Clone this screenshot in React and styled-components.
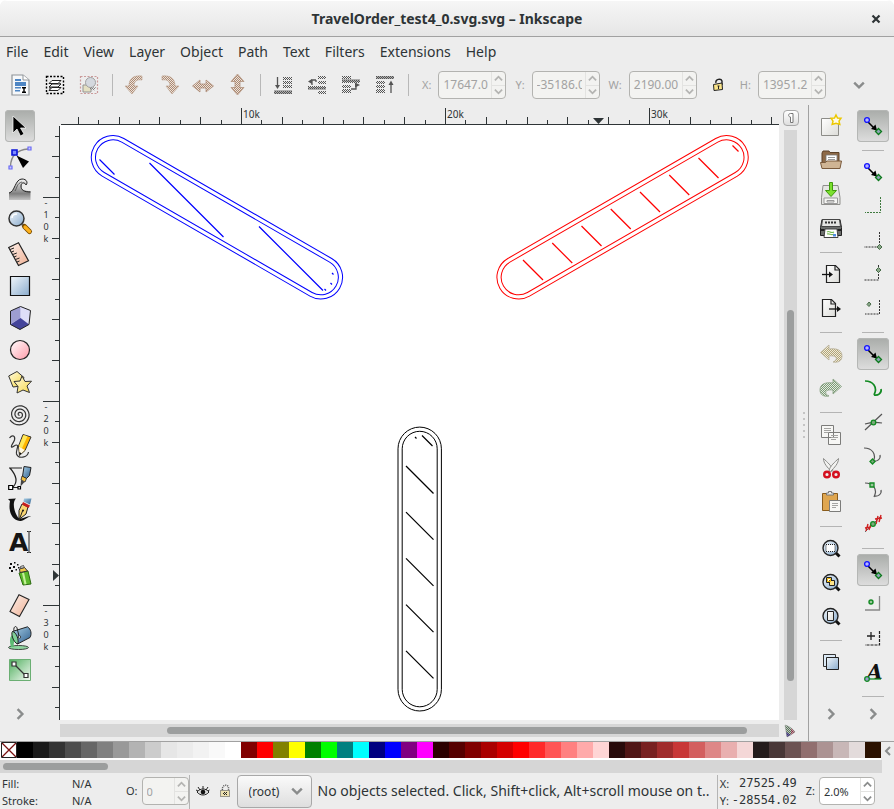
import React from 'react';
import styled, { createGlobalStyle, css } from 'styled-components';

const GlobalStyle = createGlobalStyle`
  * {
    box-sizing: border-box;
  }
  body {
    margin: 0;
    background: #fff;
    color: #2e3436;
    font-family: 'Noto Sans', 'Open Sans', sans-serif;
    font-size: 14px;
  }
  button, input, select {
    font-family: inherit;
    color: inherit;
  }
  svg {
    display: block;
    flex: none;
  }
`;

const Window = styled.div`
  display: flex;
  flex-direction: column;
  min-height: 100vh;
  background: #ededed;
  border-radius: 7px 7px 0 0;
  overflow: hidden;
`;

const TitleBar = styled.header`
  display: grid;
  grid-template-columns: 36px 1fr 36px;
  align-items: center;
  height: 37px;
  border-top: 1px solid #fff;
  border-bottom: 1px solid #a1a1a1;
  background: linear-gradient(#f6f6f6, #e6e6e6);
`;

const Title = styled.h1`
  grid-column: 2;
  margin: 0;
  font-size: 14px;
  font-weight: 700;
  text-align: center;
`;

const PlainButton = styled.button`
  display: flex;
  align-items: center;
  justify-content: center;
  padding: 0;
  border: none;
  background: none;
`;

const MenuBar = styled.nav`
  display: flex;
  align-items: center;
  gap: 15px;
  height: 29px;
  padding: 0 6px;
`;

const MenuItem = styled.button`
  padding: 0;
  border: none;
  background: none;
  font-size: 14px;
  line-height: 20px;
`;

const Toolbar = styled.div`
  display: flex;
  align-items: center;
  height: 39px;
  padding: 0 18px 2px 4px;
`;

const ToolbarButton = styled(PlainButton)`
  width: 34px;
  height: 34px;
  & > svg {
    opacity: ${(p) => (p.disabled ? 0.75 : 1)};
  }
`;

const ToolbarDivider = styled.div`
  display: flex;
  justify-content: center;
  width: 12px;
  &::before {
    content: '';
    width: 1px;
    height: 22px;
    background: #b8b8b8;
  }
`;

const Fields = styled.div`
  display: flex;
  align-items: center;
  gap: 9px;
  margin-left: 8px;
`;

const Field = styled.div`
  display: flex;
  align-items: center;
  gap: ${(p) => p.$gap || 7}px;
`;

const FieldLabel = styled.label`
  font-size: 11px;
  line-height: 16px;
  color: ${(p) => (p.$muted ? '#a2a2a2' : '#2e3436')};
`;

const LockButton = styled(PlainButton)`
  width: 25px;
  height: 28px;
`;

const MoreButton = styled(PlainButton)`
  width: 34px;
  height: 34px;
  margin-left: auto;
`;

const SpinBox = styled.div`
  display: grid;
  grid-template-columns: 1fr 14px;
  width: ${(p) => p.$width}px;
  height: 28px;
  border: 1px solid #b3b3b0;
  border-radius: 4px;
  background: ${(p) => (p.$muted ? '#f3f3f1' : '#fff')};
  overflow: hidden;
`;

const SpinInput = styled.input`
  min-width: 0;
  margin: 0 3px 0 4px;
  padding: 0;
  border: none;
  background: none;
  font-size: ${(p) => p.$size || 12}px;
  &:disabled {
    color: #a2a2a2;
  }
`;

const SpinArrows = styled.div`
  display: grid;
  grid-template-rows: 1fr 1fr;
  border-left: 1px solid #e3e3e1;
  & > button + button {
    border-top: 1px solid #e3e3e1;
  }
`;

const Workspace = styled.main`
  display: flex;
  flex: 1;
`;

const ToolRail = styled.div`
  display: flex;
  flex-direction: column;
  align-items: center;
  width: ${(p) => p.$width}px;
  padding: 5px 0 15px;
`;

const RailButton = styled(PlainButton)`
  flex: none;
  width: ${(p) => (p.$large ? 32 : 30)}px;
  height: 32px;
  margin-bottom: ${(p) => (p.$large ? 2 : 0)}px;
  border-radius: 4px;
  ${(p) =>
    p.$active &&
    css`
      background-image: linear-gradient(#a9aca9, #dedede);
      box-shadow: inset 0 0 0 1px #b5b7b5;
    `}
`;

const RailDivider = styled.div`
  flex: none;
  display: flex;
  align-items: center;
  width: 22px;
  height: 12px;
  &::before {
    content: '';
    flex: 1;
    height: 1px;
    background: #b4b4b4;
  }
`;

const RailMore = styled(PlainButton)`
  width: 24px;
  height: 24px;
  margin-top: auto;
`;

const Rails = styled.div`
  display: flex;
  padding-left: 1px;
  border-left: 1px solid #a1a1a1;
`;

const Editor = styled.section`
  flex: 1;
  min-width: 0;
  display: grid;
  grid-template-columns: 20px minmax(0, 1fr) 29px;
  grid-template-rows: 20px minmax(0, 1fr) 21px;
`;

const HorizontalRuler = styled.svg`
  grid-area: 1 / 2;
  width: 100%;
  height: 20px;
`;

const VerticalRuler = styled.svg`
  grid-area: 2 / 1;
  width: 20px;
  height: 100%;
`;

const RulerText = styled.text`
  font-size: ${(p) => p.$size}px;
  fill: #2e3436;
`;

const Canvas = styled.svg`
  grid-area: 2 / 2;
  width: 100%;
  height: 100%;
  background: #fff;
`;

const CornerCell = styled.div`
  grid-area: ${(p) => p.$row} / 3;
  display: flex;
  align-items: center;
  padding-left: 4px;
`;

const GuideButton = styled(PlainButton)`
  width: 16px;
  height: 16px;
  margin-top: 5px;
  border: 1px solid #a8a8a8;
  border-radius: 4px;
  background: linear-gradient(#fff, #dedede);
`;

const VerticalEdge = styled.div`
  grid-area: 2 / 3;
  display: flex;
  align-items: center;
  gap: 6px;
  padding: 5px 0 0 5px;
`;

const VerticalTrough = styled.div`
  display: grid;
  grid-template-rows: 180fr 372fr 39fr;
  align-self: stretch;
  width: 13px;
  padding: 0 3px;
  background: #d6d6d6;
`;

const HorizontalTrough = styled.div`
  grid-area: 3 / 2;
  display: grid;
  grid-template-columns: 107fr 580fr 32fr;
  height: 13px;
  margin-top: 4px;
  padding: 3px 0;
  background: #d6d6d6;
`;

const Thumb = styled.div`
  grid-area: ${(p) => p.$area};
  border-radius: 4px;
  background: #9c9e9e;
`;

const Grip = styled.div`
  display: grid;
  gap: 4px;
  & > i {
    width: 2px;
    height: 2px;
    background: #c4c4c4;
  }
`;

const Palette = styled.div`
  display: flex;
  border-top: 1px solid #a1a1a1;
`;

const Swatches = styled.div`
  display: flex;
  flex: 1;
  min-width: 0;
  overflow: hidden;
  padding: 0 0 2px 1px;
  background: #fff;
`;

const Swatch = styled.button`
  flex: none;
  width: 16px;
  height: 16px;
  padding: 0;
  border: none;
  background: ${(p) => p.$color};
`;

const PaletteMenu = styled(PlainButton)`
  width: 13px;
`;

const PaletteTrough = styled.div`
  height: 13px;
  margin-right: 12px;
  padding: 3px;
  background: #d6d6d6;
`;

const PaletteThumb = styled.div`
  width: 12%;
  height: 7px;
  border-radius: 4px;
  background: #9c9e9e;
`;

const StatusBar = styled.footer`
  display: flex;
  align-items: center;
  height: 36px;
`;

const StyleGrid = styled.dl`
  display: grid;
  grid-template-columns: 70px 54px;
  margin: 0;
  padding: 2px 0 0 2px;
  font-size: 11px;
  line-height: 17px;
  & > dd {
    margin: 0;
  }
`;

const StatusDivider = styled.div`
  align-self: stretch;
  width: 1px;
  margin-top: 2px;
  background: #b4b4b4;
`;

const LayerButtons = styled.div`
  display: flex;
  align-items: center;
  gap: 8px;
  padding: 0 5px 0 6px;
`;

const StatusIcon = styled(PlainButton)`
  width: 14px;
  height: 20px;
`;

const LayerPicker = styled.div`
  display: grid;
  align-items: center;
  width: 75px;
  height: 33px;
  border: 1px solid #a8a8a8;
  border-radius: 4px;
  background: linear-gradient(#fafafa, #dedede);
  & > * {
    grid-area: 1 / 1;
  }
  & > svg {
    justify-self: end;
    margin-right: 8px;
    pointer-events: none;
  }
`;

const LayerSelect = styled.select`
  appearance: none;
  width: 100%;
  height: 100%;
  padding: 0 0 0 11px;
  border: none;
  background: none;
  font-size: 12px;
`;

const Message = styled.p`
  flex: 1;
  min-width: 0;
  margin: 0;
  padding-left: 6px;
  font-size: 14px;
  line-height: 20px;
  white-space: nowrap;
  overflow: hidden;
`;

const Coordinates = styled.dl`
  display: grid;
  grid-template-columns: 12px 65px;
  margin: 0 9px 0 2px;
  padding-top: 1px;
  font-size: 11px;
  line-height: 17px;
  & > dd {
    margin: 0;
    font-family: 'DejaVu Sans Mono', monospace;
    font-size: 12px;
    text-align: right;
  }
`;

const ZoomField = styled(Field)`
  padding-right: 19px;
`;

const Chevron = ({ dir = 'down', size = 10, color = '#8a8c8c' }) => {
  const turn = { down: 0, left: 90, up: 180, right: 270 }[dir];
  return (
    <svg width={size} height={size} viewBox="0 0 10 10">
      <path
        d="M1 3l4 4 4-4"
        transform={`rotate(${turn} 5 5)`}
        fill="none"
        stroke={color}
        strokeWidth="2"
      />
    </svg>
  );
};

const Icon = ({ children, size = 24 }) => (
  <svg width={size} height={size} viewBox="0 0 24 24" fill="none" stroke="none" overflow="visible">
    {children}
  </svg>
);

const Gradients = () => (
  <svg width="0" height="0" style={{ position: 'absolute' }} aria-hidden="true">
    <defs>
      <linearGradient id="blue" x1="0" y1="0" x2="1" y2="1">
        <stop offset="0" stopColor="#f2f7fb" />
        <stop offset="1" stopColor="#8aaccd" />
      </linearGradient>
      <linearGradient id="pink" x1="0" y1="0" x2="1" y2="1">
        <stop offset="0" stopColor="#fff" />
        <stop offset="1" stopColor="#ff9aa8" />
      </linearGradient>
      <linearGradient id="peach" x1="0" y1="0" x2="1" y2="1">
        <stop offset="0" stopColor="#fdf0ea" />
        <stop offset="1" stopColor="#efb195" />
      </linearGradient>
      <linearGradient id="yellow" x1="0" y1="0" x2="1" y2="1">
        <stop offset="0" stopColor="#fffbe0" />
        <stop offset="1" stopColor="#f7d848" />
      </linearGradient>
      <linearGradient id="gray" x1="0" y1="0" x2="0" y2="1">
        <stop offset="0" stopColor="#f4f4f4" />
        <stop offset="0.700" stopColor="#7f7f7f" />
        <stop offset="1" stopColor="#c4c4c4" />
      </linearGradient>
      <linearGradient id="green" x1="0" y1="0" x2="1" y2="1">
        <stop offset="0" stopColor="#4fae5d" />
        <stop offset="1" stopColor="#f5fbf5" />
      </linearGradient>
      <linearGradient id="steel" x1="0" y1="0" x2="1" y2="1">
        <stop offset="0" stopColor="#a8cfe6" />
        <stop offset="1" stopColor="#2f5f8f" />
      </linearGradient>
      <linearGradient id="paper" x1="0" y1="0" x2="1" y2="1">
        <stop offset="0" stopColor="#fff" />
        <stop offset="1" stopColor="#dcdcd8" />
      </linearGradient>
      <pattern id="dither" width="2" height="2" patternUnits="userSpaceOnUse">
        <rect width="1" height="1" fill="#222" />
        <rect x="1" y="1" width="1" height="1" fill="#222" />
      </pattern>
      <pattern id="ditherBrown" width="2" height="2" patternUnits="userSpaceOnUse">
        <rect width="2" height="2" fill="#ecdfd6" />
        <rect width="1" height="1" fill="#97694a" />
        <rect x="1" y="1" width="1" height="1" fill="#97694a" />
      </pattern>
      <pattern id="ditherOlive" width="2" height="2" patternUnits="userSpaceOnUse">
        <rect width="2" height="2" fill="#f0ebd8" />
        <rect width="1" height="1" fill="#b0a478" />
        <rect x="1" y="1" width="1" height="1" fill="#b0a478" />
      </pattern>
      <pattern id="ditherGreen" width="2" height="2" patternUnits="userSpaceOnUse">
        <rect width="2" height="2" fill="#e4ebe0" />
        <rect width="1" height="1" fill="#7b9a76" />
        <rect x="1" y="1" width="1" height="1" fill="#7b9a76" />
      </pattern>
    </defs>
  </svg>
);

const Magnifier = ({ children }) => (
  <Icon>
    <path d="M17 17l3.500 3.500" stroke="#111" strokeWidth="3" />
    <circle cx="11.500" cy="12" r="7.500" fill="url(#blue)" stroke="#222" strokeWidth="1.400" />
    {children}
  </Icon>
);

const SnapArrow = () => (
  <Icon>
    <path d="M7 8l8 8" stroke="#000" strokeWidth="1.600" />
    <path d="M16 16.500l-6-1.500 4.500-4.500z" fill="#000" />
    <circle cx="6" cy="6" r="2.400" fill="#b6b6ff" stroke="#1414ff" strokeWidth="1.300" />
    <path
      d="M17.500 14.500l3 3-3 3-3-3z"
      fill="#8fa5b5"
      stroke="#0c7a1c"
      strokeWidth="1.300"
    />
  </Icon>
);

const arrowDown = 'M19 3C9 2 6 7 6 13H2l7 8 6-8h-4c0-4 2-7 8-6z';

const spiralPath = () => {
  const points = [];
  for (let a = 0; a <= 1140; a += 15) {
    const r = 0.4 + a / 108;
    const t = ((a - 90) * Math.PI) / 180;
    points.push(`${(11.5 - r * Math.cos(t)).toFixed(1)} ${(12.5 - r * Math.sin(t)).toFixed(1)}`);
  }
  return `M${points.join('L')}`;
};

const icons = {
  // toolbox
  select: (
    <Icon>
      <path
        d="M5 2v17l4-4 3.500 7 3.500-2-3.500-6H18z"
        fill="#000"
        stroke="#fff"
        strokeWidth=".7"
      />
    </Icon>
  ),
  node: (
    <Icon>
      <path d="M2.500 20C3 10 8 4 20 3" stroke="#888" strokeWidth="1.400" />
      <path d="M4 4h5v5H4z" fill="#7d8bff" stroke="#0a14d8" strokeWidth="1.600" />
      <path d="M20 1h3v3h-3zM1 20h3v3H1z" fill="#c9c9ff" stroke="#6a6af5" strokeWidth="1.200" />
      <path d="M8.500 9.500L21 15.500 15 22z" fill="#000" />
    </Icon>
  ),
  tweak: (
    <Icon>
      <path
        d="M1 15c6-1 6-14 14-14 5 0 5 5 3 6-1-2-4-2-4.500 1-.5 4 3 5 9 5v9H1z"
        fill="url(#gray)"
      />
      <path d="M1 15c6-1 6-14 13-14 5 0 6 4 4 6-1-3-5-3-5 1 0 4 3 6 9.500 6" stroke="#222" />
      <path d="M7 13c2-3 2-8 7-9" stroke="#444" strokeWidth=".8" />
    </Icon>
  ),
  zoom: (
    <Icon>
      <path d="M14 14l3 3" stroke="#666" strokeWidth="2.500" />
      <path d="M16.500 16.500l5 5" stroke="#7a4c00" strokeWidth="5" strokeLinecap="round" />
      <path d="M17 17l4.500 4.500" stroke="#ffb21c" strokeWidth="3.200" strokeLinecap="round" />
      <circle cx="8.500" cy="8.500" r="7.500" fill="url(#blue)" stroke="#333" strokeWidth="1.500" />
      <path d="M4 8c0-3 3-4 5-4" stroke="#fff" strokeWidth="1.500" />
    </Icon>
  ),
  measure: (
    <Icon>
      <path d="M.7 5.500L10.500.7l10 18-10 4.800z" fill="url(#peach)" stroke="#222" strokeWidth="1.200" />
      <path
        d="M2 7.500l4-1.500M3.500 10l2.500-1M4.800 12.500l4-1.500M6 15l2.500-1M7.500 17.500l4-1.500M9 20l2.500-1"
        stroke="#222"
      />
    </Icon>
  ),
  rect: (
    <Icon>
      <path d="M2.500 2.500h19v19h-19z" fill="url(#blue)" stroke="#111" strokeWidth="1.200" />
    </Icon>
  ),
  box: (
    <Icon>
      <path d="M2.500 5l10-4.500 10 4-1.500 14-9 5-9.500-5z" fill="#c9c9ee" />
      <path d="M2.500 5l10-4.500V12l-10 6z" fill="#9d9dd0" />
      <path d="M12.500.5l10 4L21 18l-8.500-6z" fill="#dedef8" />
      <path d="M2.500 18.500l10-6.500 8.500 6.500-9 5z" fill="#44449a" />
      <path d="M2.500 5l10-4.500 10 4-1.500 14-9 5-9.500-5z" stroke="#222" />
    </Icon>
  ),
  circle: (
    <Icon>
      <circle cx="12" cy="12" r="9.500" fill="url(#pink)" stroke="#222" strokeWidth="1.200" />
    </Icon>
  ),
  star: (
    <Icon>
      <path d="M.7 6L9 1.500l7 6-3 8.500-8 1z" fill="url(#yellow)" stroke="#333" />
      <path
        d="M14 6l3 5.500 6.500-.3-4.500 4.800 2.500 6.500-6.500-2.500-6 3 1-6.500-4-5 6-.5z"
        fill="url(#yellow)"
        stroke="#333"
      />
    </Icon>
  ),
  spiral: (
    <Icon>
      <path d={spiralPath()} stroke="#333" strokeWidth="1.200" />
    </Icon>
  ),
  pencil: (
    <Icon>
      <path
        d="M1.500 4c3-4 6-2 5 2-1 3-4 6-3 7s3-2 5-2c3 0-1 6 0 9 2 5 11 4 12-2"
        stroke="#333"
        strokeWidth="1.200"
      />
      <path d="M15 .5l8 2.500-6 13.500-5.500 5-1-9.500z" fill="#ffb400" stroke="#333" />
      <path d="M15.500 1l4 1.200-5.500 12-3-2z" fill="#ffe95a" />
      <path d="M11 12.500l5.700 3.500-5 5z" fill="#fff8e4" />
      <path d="M11.300 18l2.200 1.300-2 2z" fill="#000" />
    </Icon>
  ),
  bezier: (
    <Icon>
      <path d="M1 2h13M2 2c7 8 8 14 3 19M5 21.500h6" stroke="#222" strokeWidth="1.200" />
      <path d="M.7 19.500h4v4h-4zM10 20.500h2.500v2.500H10z" fill="#fff" stroke="#000" strokeWidth="1.200" />
      <path d="M16 .5l7 1-1.500 8-3 3-4-2z" fill="url(#steel)" stroke="#222" />
      <path d="M14 10l4.500 2.500-1.500 3.500-4-2z" fill="#f0c040" stroke="#222" strokeWidth=".8" />
      <path d="M13 14l3.500 2-4 4.500z" fill="#444" />
    </Icon>
  ),
  calligraphy: (
    <Icon>
      <path d="M0 1l8-.5c-4 4-2 13 2 19 4 3 9-2 13-1-4 0-7 5-11 4.500C4 22 0 14 2 3z" fill="#111" />
      <path d="M14 6l6 3-2 7-7 5.500v-9z" fill="#f9d673" stroke="#222" />
      <path d="M11.500 21l3-8" stroke="#222" />
      <circle cx="15" cy="12.500" r="1" fill="#111" />
      <path d="M15 4l7 3.500-1.500 2.500L14 6.500z" fill="#c81e1e" />
      <path d="M16 .5h7.500l-1.500 6-6.500-3z" fill="url(#steel)" />
    </Icon>
  ),
  text: (
    <Icon>
      <path d="M21 2v20M19 1.500h1.500L21 2l.5-.5H23M19 22.500h1.500L21 22l.5.500H23" stroke="#222" />
      <text x="1" y="20.500" fontFamily="DejaVu Sans" fontWeight="700" fontSize="25" fill="#151515">
        A
      </text>
    </Icon>
  ),
  spray: (
    <Icon>
      <path
        d="M2 1h2v2H2zM6 0h1.500v1.500H6zM1 5h2v2H1zM5 4h2v2H5zM9 2h1.500v1.500H9zM3 8h2v2H3zM7.500 7H9v1.500H7.500zM10 5h1.500v1.500H10z"
        fill="#111"
      />
      <path d="M11 11l9-2 3 13-8 1z" fill="#5cb82c" stroke="#2c6a10" />
      <path d="M14 11l2-.5 2.500 11.500-2 .5z" fill="#c5f09a" />
      <path d="M11.500 7l5-1.500 3 3.500-7.500 1.500z" fill="#f3c64c" stroke="#333" />
      <path d="M12.500 4.500l3-1 .8 2-3.500 1z" fill="#ddd" stroke="#333" strokeWidth=".8" />
    </Icon>
  ),
  eraser: (
    <Icon>
      <path d="M11 .8l10 4.700-9.500 17L2 17.500z" fill="url(#peach)" stroke="#222" strokeWidth="1.100" />
    </Icon>
  ),
  bucket: (
    <Icon>
      <ellipse cx="10.500" cy="21.500" rx="10" ry="2" fill="#8fd6a0" stroke="#333" strokeWidth=".9" />
      <path d="M4 9c-3 3-2 8-1 12h3c-1-4 1-6 1-9z" fill="#5dbb74" />
      <path d="M4.500 5.500L19.500.8C23 3 24 8 22 11.500L9.500 18z" fill="url(#steel)" stroke="#222" />
      <path d="M4.500 5.500c-2 2 1 11 5 12.500 2-3-1-12-5-12.500z" fill="#7fd098" stroke="#222" />
      <path d="M6 5c-1-4 2-6 3-3l2 8" stroke="#222" />
      <circle cx="11.500" cy="11" r="1.200" fill="#fff" stroke="#222" strokeWidth=".8" />
    </Icon>
  ),
  gradient: (
    <Icon>
      <path d="M1.500 1.500h21v21h-21z" fill="url(#green)" stroke="#6aae72" />
      <path d="M6 6l11 11" stroke="#333" strokeWidth="1.200" />
      <path d="M4 4h4v4H4zM16 15.500h4v4h-4z" fill="#fff" stroke="#333" strokeWidth="1.200" />
    </Icon>
  ),

  // control bar
  selectAll: (
    <Icon>
      <path d="M3 2h11l6 5v15H3z" fill="#f6f8fa" stroke="#8f9498" strokeWidth="1.200" />
      <path d="M14 2v5h6" fill="#fff" stroke="#8f9498" />
      <path d="M6 6h6v2H6zM6 9h11v4H6zM6 14h7v1.500H6zM6 17h5v1.500H6z" fill="#4e86c4" />
      <path d="M12 14h6v6h-6z" fill="#fff" />
      <path d="M13 14.700h4M15 14.700v4.500M13 19.300h4" stroke="#000" strokeWidth="1.400" />
    </Icon>
  ),
  selectLayers: (
    <Icon>
      <path d="M3.500 3.500h17v17h-17z" stroke="#000" strokeWidth="1.400" strokeDasharray="2 1.500" />
      <path d="M7 14l3-3h8l-3 3zv3h8l3-3" fill="#fff" stroke="#222" />
      <path d="M6 17.500l3-3h9l-3 3zM6 14l3-3h9l-3 3z" fill="#fff" stroke="#222" />
      <path d="M6 10.500l3-3h9l-3 3z" fill="#fff" stroke="#222" />
    </Icon>
  ),
  deselect: (
    <Icon>
      <path
        d="M3.500 3.500h17v17h-17z"
        stroke="#c08080"
        strokeWidth="1.200"
        strokeDasharray="2 1.500"
      />
      <path d="M6 12h8v7H6z" fill="#e2dcb4" stroke="#777" />
      <circle cx="13.500" cy="9.500" r="5" fill="#ccd2da" stroke="#888" />
      <path d="M12 15l5 3 2-4" fill="url(#dither)" opacity=".7" />
    </Icon>
  ),
  rotateLeft: (
    <Icon>
      <path d={arrowDown} fill="url(#ditherBrown)" stroke="#a98468" strokeWidth=".6" />
    </Icon>
  ),
  rotateRight: (
    <Icon>
      <path
        d={arrowDown}
        transform="translate(24 0) scale(-1 1)"
        fill="url(#ditherBrown)"
        stroke="#a98468"
        strokeWidth=".6"
      />
    </Icon>
  ),
  flipH: (
    <Icon>
      <path
        d="M1.500 13L9 7v4h6V7l7.500 6-7.500 6v-4H9v4z"
        fill="url(#ditherBrown)"
        stroke="#97694a"
        strokeWidth=".7"
      />
    </Icon>
  ),
  flipV: (
    <Icon>
      <path
        d="M12.500 1L19 8.500h-4v6h4L12.500 22 6 14.500h4v-6H6z"
        fill="url(#ditherBrown)"
        stroke="#97694a"
        strokeWidth=".7"
      />
    </Icon>
  ),
  toBottom: (
    <Icon>
      <path d="M3 17h18v4H3z" fill="#999" />
      <path d="M12 4h9v3h-9zM12 8h9v3h-9zM12 12h9v3h-9zM3 18h18v3H3z" fill="url(#dither)" />
      <path d="M6.500 4v9" stroke="#222" strokeWidth="1.300" />
      <path d="M4 12h5l-2.500 4z" fill="#222" />
    </Icon>
  ),
  lower: (
    <Icon>
      <path d="M3 14h18v3H3z" fill="#999" />
      <path d="M13 3h8v3h-8zM13 8h8v3h-8zM3 13h18v3H3zM13 18h8v3h-8z" fill="url(#dither)" />
      <path d="M11 7H7v5M11 7v2" stroke="#222" strokeWidth="1.300" />
      <path d="M3 8.500l4-2.500v5z" fill="#222" />
    </Icon>
  ),
  raise: (
    <Icon>
      <path d="M3 6h18v3H3z" fill="#999" />
      <path d="M3 3h9v3H3zM3 7h18v3H3zM3 12h9v3H3zM3 16h9v4H3z" fill="url(#dither)" />
      <path d="M12 16h5v-4" stroke="#222" strokeWidth="1.300" />
      <path d="M21 12l-5-2.500v5z" fill="#222" />
    </Icon>
  ),
  toTop: (
    <Icon>
      <path d="M3 3h18v3H3z" fill="#999" />
      <path d="M3 3h18v3H3zM3 8h9v3H3zM3 12h9v3H3zM3 16h9v4H3z" fill="url(#dither)" />
      <path d="M18 10v10" stroke="#222" strokeWidth="1.300" />
      <path d="M15.500 12h5L18 7.500z" fill="#222" />
    </Icon>
  ),
  lock: (
    <svg width="14" height="14" viewBox="0 0 14 14" fill="none">
      <path d="M5 5c-1-4 5-5 6-2v4" stroke="#222" strokeWidth="1.400" />
      <path d="M2.500 6.500L11 5l.5 6.500-8.500 1z" fill="#fbe58a" stroke="#222" />
      <path d="M6.500 8h2M7.500 8v3" stroke="#222" />
    </svg>
  ),
  pilcrow: (
    <svg width="8" height="10" viewBox="0 0 8 10" fill="none">
      <path d="M6 .5H3.500C1 .5 1 4 3.500 4v5.500H6z" fill="#fff" stroke="#777" strokeWidth="1" />
    </svg>
  ),
  cms: (
    <svg width="14" height="14" viewBox="0 0 14 14" fill="none">
      <path d="M2 1c4 1 8 4 10 7L4 13z" fill="#b9d4bb" />
      <path d="M8 4l4 4-4 3z" fill="#d78b9b" />
      <path d="M3 8l1 5 4-2z" fill="#6f62b8" />
      <path
        d="M2 1c4 1 8 4 10 7L4 13z"
        fill="url(#dither)"
        stroke="#666"
        strokeWidth=".6"
        opacity=".6"
      />
    </svg>
  ),

  // commands bar
  fileNew: (
    <Icon>
      <path d="M2.500 4.500h17v17h-17z" fill="url(#paper)" stroke="#8c8c88" />
      <path
        d="M17 1l1.500 3 3.500.2-2 3 .8 3.300L17 9.300l-3.800 1.200.8-3.300-2-3 3.500-.2z"
        fill="#fffbe6"
        stroke="#ecc800"
        strokeWidth="1.500"
      />
    </Icon>
  ),
  fileOpen: (
    <Icon>
      <g transform="translate(0 1)">
        <path d="M3 4l1-2h6l1 1.500h9V16H3z" fill="#8e6a48" stroke="#5c4128" />
        <path d="M7 6h11v9H7z" fill="#fff" stroke="#777" strokeWidth=".8" />
        <path d="M9 8.500h7M9 10.500h7M9 12.500h7" stroke="#999" />
        <path d="M1.500 13.500h5l1.500-1.500h14.500l-1.500 7.500H3z" fill="#cfb494" stroke="#7a5a3c" />
      </g>
    </Icon>
  ),
  fileSave: (
    <Icon>
      <path d="M4 3.500h15l2 12v7H2.500v-7z" fill="#e6e6e4" stroke="#8f8f8c" />
      <path d="M5 16h13.500v5.500H5z" fill="#f6f6f4" stroke="#999" />
      <path d="M8 18.500h7v1.500H8z" stroke="#999" />
      <path d="M10.500.5h3v8h4l-5.500 6-5.500-6h4z" fill="#7be02e" stroke="#3f9a0c" />
    </Icon>
  ),
  print: (
    <Icon>
      <g transform="translate(0 1)">
        <path d="M3 2.500h18l1.500 8v8H1.500v-8z" fill="#6c6e6c" stroke="#222" />
        <path d="M3.500 2.500h17l1 7h-19z" fill="#e4e4e2" stroke="#444" />
        <path d="M6 5.500h12" stroke="#333" strokeWidth="2" strokeDasharray="2 1" />
        <path d="M2 13h20" stroke="#222" strokeWidth="2" />
        <path d="M6 12h12l1 8.500H5z" fill="#fff" stroke="#444" />
        <path d="M8 15c3-2 3 2 7 0M8 17c3-1 4 2 7 0" stroke="#74b850" strokeWidth="1.200" />
        <path d="M14 17h3v2.500h-3z" fill="#4f8be0" />
      </g>
    </Icon>
  ),
  importFile: (
    <Icon>
      <path d="M7.500 3.500h9l4 4v13h-13z" fill="url(#paper)" stroke="#222" strokeWidth="1.200" />
      <path d="M16 3.500v4.500h4.500" stroke="#222" strokeWidth="1.200" />
      <path d="M3 12.500h8" stroke="#111" strokeWidth="1.300" />
      <path d="M14 12.500l-4-3v6z" fill="#111" />
    </Icon>
  ),
  exportFile: (
    <Icon>
      <path d="M3.500 3.500h9l4 4v13h-13z" fill="url(#paper)" stroke="#222" strokeWidth="1.200" />
      <path d="M12 3.500v4.500h4.500" stroke="#222" strokeWidth="1.200" />
      <path d="M10 13h8" stroke="#111" strokeWidth="1.300" />
      <path d="M22 13l-4-3v6z" fill="#111" />
    </Icon>
  ),
  undo: (
    <Icon>
      <path
        d="M10 3v4c8-1 13 1 13 7 0 5-4 7-9 6 5-2 5-7-4-6v4L1.500 10.500z"
        fill="url(#ditherOlive)"
        stroke="#b8b09a"
        strokeWidth=".8"
      />
    </Icon>
  ),
  redo: (
    <Icon>
      <path
        d="M14 3v4C6 6 1 8 1 14c0 5 4 7 9 6-5-2-5-7 4-6v4l8.500-7.500z"
        fill="url(#ditherGreen)"
        stroke="#87a082"
        strokeWidth=".8"
      />
    </Icon>
  ),
  copy: (
    <Icon>
      <path d="M2.500 3.500h12v12h-12zM9.500 10.500h12v12h-12z" fill="#f7f7f5" stroke="#7c7c7a" />
      <path d="M5 6.500h7M5 8.500h7M5 10.500h4M12 13.500h7M12 15.500h7M12 17.500h5" stroke="#a4a4a2" />
    </Icon>
  ),
  cut: (
    <Icon>
      <path d="M4.500 2.500c0 5 4 9 8 13l1.500-1C13 10 8 6 4.500 2.500z" fill="#f2f2f0" stroke="#8a8a88" />
      <path d="M19.500 2.500c0 5-4 9-8 13l-1.500-1c1-4.500 6-8.500 9.500-12z" fill="#f2f2f0" stroke="#8a8a88" />
      <circle cx="8" cy="18.500" r="2.800" stroke="#d40f1e" strokeWidth="2.400" />
      <circle cx="17" cy="18.500" r="2.800" stroke="#d40f1e" strokeWidth="2.400" />
    </Icon>
  ),
  paste: (
    <Icon>
      <path d="M3.500 3.500h15v17h-15z" fill="#dfa650" stroke="#8a5c1c" />
      <path d="M7.500 5V3h2V1.500h3V3h2v2z" fill="#e8e8e6" stroke="#777" />
      <path d="M10.500 10.500h11v11h-11z" fill="#f7f7f5" stroke="#7c7c7a" />
      <path d="M13 13.500h6M13 15.500h6M13 17.500h4" stroke="#a4a4a2" />
    </Icon>
  ),
  zoomSelection: (
    <Magnifier>
      <path d="M7 8.500h9v7H7z" fill="#fff" stroke="#222" strokeDasharray="1 1" />
    </Magnifier>
  ),
  zoomDrawing: (
    <Magnifier>
      <path d="M7.500 7.500h5v5h-5z" fill="#fff" stroke="#222" />
      <path d="M10.500 10.500h5v5h-5z" fill="#ffe48a" stroke="#222" />
      <path d="M8.500 8.500h3v3h-3z" stroke="#f0b800" />
    </Magnifier>
  ),
  zoomPage: (
    <Magnifier>
      <path d="M8.500 7.500h6v9h-6z" fill="url(#paper)" stroke="#222" />
    </Magnifier>
  ),
  duplicate: (
    <Icon>
      <path d="M4.500 4.500h12v12h-12z" fill="#dceaf6" stroke="#333" />
      <path d="M7.500 7.500h12v12h-12z" fill="url(#blue)" stroke="#222" />
    </Icon>
  ),

  // snap bar
  snap: <SnapArrow />,
  snapBoxEdge: (
    <Icon>
      <path d="M19.500 3v15.500H4" stroke="#3f7a3f" strokeDasharray="2 1" />
    </Icon>
  ),
  snapBoxCorner: (
    <Icon>
      <path d="M18.500 4v15H3" stroke="#333" strokeDasharray="2 1" />
      <path d="M18.500 16.500l2.500 2.500-2.500 2.500L16 19z" fill="#8aa88a" stroke="#486b48" />
    </Icon>
  ),
  snapBoxMiddle: (
    <Icon>
      <path d="M17.500 3v15H3" stroke="#333" strokeDasharray="2 1" />
      <path d="M17.500 5.500L20 8l-2.500 2.500L15 8z" fill="#8aa88a" stroke="#486b48" />
    </Icon>
  ),
  snapBoxCenter: (
    <Icon>
      <path d="M18.500 4v14H4" stroke="#333" strokeDasharray="2 1" />
      <path d="M8 6l2 2-2 2.500L6 8.500z" fill="#8aa88a" stroke="#486b48" />
    </Icon>
  ),
  snapPath: (
    <Icon>
      <path d="M4 5c8 0 13 6 9 14M13 19c4 1 8-2 7-6" stroke="#128a22" strokeWidth="1.700" />
    </Icon>
  ),
  snapIntersect: (
    <Icon>
      <path d="M4 20L21 4M4 14c6-2 11-2 17-1" stroke="#555" strokeWidth="1.200" />
      <circle cx="12.500" cy="12.500" r="2.300" fill="#7ba97b" stroke="#128a22" strokeWidth="1.300" />
    </Icon>
  ),
  snapCusp: (
    <Icon>
      <path d="M3 4c8 0 13 6 9 14M12 17c4 1 8-2 7-6" stroke="#555" strokeWidth="1.200" />
      <path d="M11.500 15l2.500 2.500-2.500 2.500L9 17.500z" fill="#7ba97b" stroke="#128a22" strokeWidth="1.300" />
    </Icon>
  ),
  snapSmooth: (
    <Icon>
      <path d="M4 5c8 0 13 6 9 14M13 18c4 1 8-2 7-6" stroke="#555" strokeWidth="1.200" />
      <path d="M9 5h4v4H9z" fill="#9cc69c" stroke="#128a22" strokeWidth="1.300" />
    </Icon>
  ),
  snapMidpoint: (
    <Icon>
      <path d="M4 20L20 4" stroke="#666" />
      <path
        d="M5 19l2-7M8 18l2-6M4 16l6-1M15 12l2-8M18 10l2-7M14 7l7-1"
        stroke="#cf2020"
        strokeWidth="1.400"
      />
      <circle cx="12" cy="12" r="2.300" fill="#7ba97b" stroke="#128a22" strokeWidth="1.300" />
    </Icon>
  ),
  snapCenter: (
    <Icon>
      <path d="M18.500 4v14H4" stroke="#888" strokeWidth="1.300" />
      <circle cx="10" cy="10" r="2" fill="#9cc69c" stroke="#128a22" strokeWidth="1.400" />
    </Icon>
  ),
  snapRotation: (
    <Icon>
      <path d="M18.500 5v14H4" stroke="#222" strokeWidth="1.200" strokeDasharray="3 1" />
      <path d="M10 6v8M6 10h8" stroke="#222" strokeWidth="1.300" />
    </Icon>
  ),
  snapText: (
    <Icon>
      <text
        x="6"
        y="19"
        fontFamily="DejaVu Serif"
        fontWeight="700"
        fontStyle="italic"
        fontSize="20"
        fill="#111"
      >
        A
      </text>
      <path d="M6 19h14" stroke="#128a22" strokeWidth="1.300" />
      <circle cx="6" cy="19" r="2.300" fill="#9a9ad0" stroke="#128a22" strokeWidth="1.300" />
    </Icon>
  ),
  eye: (
    <svg width="14" height="14" viewBox="0 0 14 14" fill="none">
      <path d="M1 8c3-4 9-4 12 0-3 4-9 4-12 0z" fill="#ddd" stroke="#222" />
      <path d="M2 3l2 3M7 2v3M12 3l-2 3M0 6l2 1M13.500 6L12 7" stroke="#222" />
      <circle cx="7" cy="8" r="2.300" fill="#111" />
    </svg>
  ),
  layerLock: (
    <svg width="14" height="14" viewBox="0 0 14 14" fill="none">
      <path d="M4.500 6C3.500 1 9 0 10.500 3v4" stroke="#555" strokeDasharray="1 1" strokeWidth="1.500" />
      <path d="M2.500 6.500h9v6h-9z" fill="#eee2b0" stroke="#444" strokeDasharray="1 1" />
      <path d="M5 8h4v3H5z" fill="url(#dither)" />
    </svg>
  ),
};

const menus = [
  'File', 'Edit', 'View', 'Layer', 'Object', 'Path', 'Text', 'Filters', 'Extensions', 'Help',
];

// nothing is selected, so everything that acts on a selection is greyed out
const controls = [
  { names: ['selectAll', 'selectLayers'], more: ['deselect'] },
  { names: [], more: ['rotateLeft', 'rotateRight', 'flipH', 'flipV'] },
  { names: [], more: ['toBottom', 'lower', 'raise', 'toTop'] },
];

const tools = [
  'select', 'node', 'tweak', 'zoom', 'measure', 'rect', 'box', 'circle', 'star', 'spiral',
  'pencil', 'bezier', 'calligraphy', 'text', 'spray', 'eraser', 'bucket', 'gradient',
];

const commands = [
  'fileNew', 'fileOpen', 'fileSave', 'print', '|',
  'importFile', 'exportFile', '|',
  'undo', 'redo', '|',
  'copy', 'cut', 'paste', '|',
  'zoomSelection', 'zoomDrawing', 'zoomPage', '|',
  'duplicate',
];

const snaps = [
  'snap*', '|',
  'snap', 'snapBoxEdge', 'snapBoxCorner', 'snapBoxMiddle', 'snapBoxCenter', '|',
  'snap*', 'snapPath', 'snapIntersect', 'snapCusp', 'snapSmooth', 'snapMidpoint', '|',
  'snap*', 'snapCenter', 'snapRotation', 'snapText', '|',
];

const palette = [
  '#000000', '#1a1a1a', '#333333', '#4d4d4d', '#666666', '#808080', '#999999', '#b3b3b3',
  '#cccccc', '#e6e6e6', '#ececec', '#f2f2f2', '#f9f9f9', '#ffffff', '#800000', '#ff0000',
  '#808000', '#ffff00', '#008000', '#00ff00', '#008080', '#00ffff', '#000080', '#0000ff',
  '#800080', '#ff00ff', '#2b0000', '#550000', '#800000', '#aa0000', '#d40000', '#ff0000',
  '#ff2a2a', '#ff5555', '#ff8080', '#ffaaaa', '#ffd5d5', '#280b0b', '#501616', '#782121',
  '#a02c2c', '#c83737', '#d35f5f', '#de8787', '#e9afaf', '#f4d7d7', '#241c1c', '#483737',
  '#6c5353', '#916f6f', '#ac9393', '#c8b7b7', '#e3dbdb', '#2b1100',
];

const Spin = ({ id, value, width, muted, size }) => (
  <SpinBox $width={width} $muted={muted}>
    <SpinInput id={id} defaultValue={value} disabled={muted} $size={size} />
    <SpinArrows>
      <PlainButton aria-label="Increase" disabled={muted}>
        <Chevron dir="up" size={9} color={muted ? '#b4b4b2' : '#8a8c8c'} />
      </PlainButton>
      <PlainButton aria-label="Decrease" disabled={muted}>
        <Chevron size={9} color={muted ? '#b4b4b2' : '#8a8c8c'} />
      </PlainButton>
    </SpinArrows>
  </SpinBox>
);

const SpinField = ({ id, label, value }) => (
  <Field>
    <FieldLabel htmlFor={id} $muted>{label}</FieldLabel>
    <Spin id={id} value={value} width={68} muted />
  </Field>
);

// ten subdivisions per major mark, every second one is taller
const marks = (origin) =>
  Array.from({ length: 120 }, (_, n) => {
    const i = n - 10;
    const kind = i % 10 === 0 ? 0 : i % 2 === 0 ? 1 : 2;
    return { i, kind, at: Math.round(origin + i * 20.4) + 0.5 };
  });

const Rulers = () => (
  <>
    <HorizontalRuler>
      {marks(181).map(({ i, kind, at }) => (
        <path key={i} d={`M${at} ${[3, 12, 15][kind]}V19`} stroke="#2e3436" />
      ))}
      {[1, 2, 3].map((n) => (
        <RulerText key={n} $size={10} x={183 + (n - 1) * 204} y="13">{n}0k</RulerText>
      ))}
      <path d="M533 13h11l-5.500 6z" fill="#2e3436" />
      <path d="M1 19.500H4000" stroke="#2e3436" />
    </HorizontalRuler>
    <VerticalRuler>
      {marks(72)
        .filter(({ at }) => at > 2)
        .map(({ i, kind, at }) => (
          <path key={i} d={`M${[3, 12, 15][kind]} ${at}H19`} stroke="#2e3436" />
        ))}
      {[1, 2, 3].map((n) =>
        ['-', n, '0', 'k'].map((c, row) => (
          <RulerText
            key={`${n}${row}`}
            $size={9}
            x="6"
            y={81 + (n - 1) * 204 + row * 12}
            textAnchor="middle"
          >
            {c}
          </RulerText>
        ))
      )}
      <path d="M13 445v11l6-5.500z" fill="#2e3436" />
      <path d="M19.500 1V4000" stroke="#2e3436" />
    </VerticalRuler>
  </>
);

const Capsule = ({ x, y, angle, length, color }) => (
  <g transform={`translate(${x} ${y}) rotate(${angle})`} stroke={color} fill="none">
    <rect x="-21.700" y="-21.700" width={length + 43.4} height="43.400" rx="21.700" />
    <rect x="-17.500" y="-17.500" width={length + 35} height="35" rx="17.500" />
  </g>
);

const Drawing = () => (
  <Canvas role="img" aria-label="Drawing">
    <Capsule x={53} y={32.3} angle={30} length={240} color="#0000ff" />
    <path
      d="M39.500 34.500l15 15M89.500 38l74 74M199 101.500l64 64M272 148l1.500 1.500M270.500 158l1.500 1.500M264.500 164l1.500 1.500"
      stroke="#0000ff"
      strokeWidth="1.200"
    />
    <Capsule x={666.500} y={32.3} angle={150} length={240} color="#ff0000" />
    <g stroke="#ff0000" strokeWidth="1.200">
      <path d="M672.500 20.500l6 6" />
      {[0, 1, 2, 3, 4, 5, 6].map((n) => (
        <path key={n} d={`M${638.5 - n * 29.25} ${33 + n * 17}l20 20`} />
      ))}
    </g>
    <Capsule x={359.700} y={323.800} angle={90} length={240.500} color="#000" />
    <g stroke="#000" strokeWidth="1.200">
      <path d="M362 310.500l10.500 10.500M355 312l1.500 1.500" />
      {[0, 1, 2, 3, 4].map((n) => (
        <path key={n} d={`M346 ${341 + n * 46.2}l27.500 27.500`} />
      ))}
    </g>
  </Canvas>
);

const Rail = ({ label, items, width, large, activeFirst }) => (
  <ToolRail $width={width} role="toolbar" aria-label={label}>
    {items.map((item, n) => {
      if (item === '|') return <RailDivider key={n} />;
      const name = item.replace('*', '');
      const active = item.endsWith('*') || (activeFirst && n === 0);
      return (
        <RailButton key={n} $large={large} $active={active} aria-label={name}>
          {icons[name]}
        </RailButton>
      );
    })}
    <RailMore aria-label="More">
      <Chevron dir="right" size={12} />
    </RailMore>
  </ToolRail>
);

export default function App() {
  return (
    <Window>
      <GlobalStyle />
      <Gradients />
      <TitleBar>
        <Title>TravelOrder_test4_0.svg.svg – Inkscape</Title>
        <PlainButton aria-label="Close">
          <svg width="10" height="10" viewBox="0 0 10 10">
            <path d="M1.500 1.500l7 7M8.500 1.500l-7 7" stroke="#2e3436" strokeWidth="2.200" />
          </svg>
        </PlainButton>
      </TitleBar>

      <MenuBar>
        {menus.map((m) => (
          <MenuItem key={m}>{m}</MenuItem>
        ))}
      </MenuBar>

      <Toolbar>
        {controls.map(({ names, more }, g) => (
          <React.Fragment key={g}>
            {names.map((name) => (
              <ToolbarButton key={name} aria-label={name}>{icons[name]}</ToolbarButton>
            ))}
            {more.map((name) => (
              <ToolbarButton key={name} aria-label={name} disabled>{icons[name]}</ToolbarButton>
            ))}
            <ToolbarDivider />
          </React.Fragment>
        ))}
        <Fields>
          <SpinField id="x" label="X:" value="17647.0" />
          <SpinField id="y" label="Y:" value="-35186.0" />
          <SpinField id="w" label="W:" value="2190.00" />
          <LockButton aria-label="Lock ratio">{icons.lock}</LockButton>
          <SpinField id="h" label="H:" value="13951.2" />
        </Fields>
        <MoreButton aria-label="More">
          <Chevron size={12} />
        </MoreButton>
      </Toolbar>

      <Workspace>
        <Rail label="Tools" items={tools} width={40} activeFirst />
        <Editor>
          <Rulers />
          <CornerCell $row={1}>
            <GuideButton aria-label="Guides">{icons.pilcrow}</GuideButton>
          </CornerCell>
          <Drawing />
          <VerticalEdge>
            <VerticalTrough>
              <Thumb $area="2 / 1" />
            </VerticalTrough>
            <Grip>
              <i /><i /><i /><i /><i />
            </Grip>
          </VerticalEdge>
          <HorizontalTrough>
            <Thumb $area="1 / 2" />
          </HorizontalTrough>
          <CornerCell $row={3}>{icons.cms}</CornerCell>
        </Editor>
        <Rails>
          <Rail label="Commands" items={commands} width={42} large />
          <Rail label="Snapping" items={snaps} width={42} large />
        </Rails>
      </Workspace>

      <Palette>
        <Swatches>
          <Swatch aria-label="None" $color="#fff">
            <svg width="16" height="16" viewBox="0 0 16 16">
              <path d="M1 1l14 14M15 1L1 15" stroke="#7a1010" strokeWidth="1.300" />
              <path d="M.5.5h15v15H.5z" fill="none" stroke="#222" />
            </svg>
          </Swatch>
          {palette.map((c, n) => (
            <Swatch key={n} $color={c} aria-label={c} />
          ))}
        </Swatches>
        <PaletteMenu aria-label="Palettes">
          <Chevron dir="left" />
        </PaletteMenu>
      </Palette>
      <PaletteTrough>
        <PaletteThumb />
      </PaletteTrough>

      <StatusBar>
        <StyleGrid>
          <dt>Fill:</dt>
          <dd>N/A</dd>
          <dt>Stroke:</dt>
          <dd>N/A</dd>
        </StyleGrid>
        <Field $gap={4}>
          <FieldLabel htmlFor="opacity">O:</FieldLabel>
          <Spin id="opacity" value="0" width={47} muted size={11} />
        </Field>
        <StatusDivider />
        <LayerButtons>
          <StatusIcon aria-label="Layer visibility">{icons.eye}</StatusIcon>
          <StatusIcon aria-label="Layer lock">{icons.layerLock}</StatusIcon>
        </LayerButtons>
        <LayerPicker>
          <LayerSelect aria-label="Current layer">
            <option>(root)</option>
          </LayerSelect>
          <Chevron size={12} />
        </LayerPicker>
        <Message>No objects selected. Click, Shift+click, Alt+scroll mouse on t..</Message>
        <StatusDivider />
        <Coordinates>
          <dt>X:</dt>
          <dd>27525.49</dd>
          <dt>Y:</dt>
          <dd>-28554.02</dd>
        </Coordinates>
        <ZoomField $gap={4}>
          <FieldLabel htmlFor="zoom">Z:</FieldLabel>
          <Spin id="zoom" value="2.0%" width={56} size={11} />
        </ZoomField>
      </StatusBar>
    </Window>
  );
}
